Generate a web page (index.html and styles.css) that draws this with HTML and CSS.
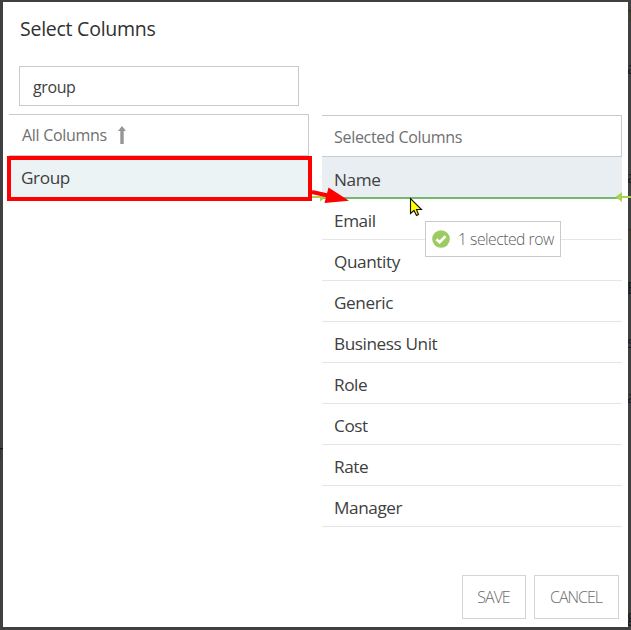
FILE: index.html
```html
<!DOCTYPE html>
<html lang="en">
<head>
<meta charset="utf-8">
<title>Select Columns</title>
<link rel="stylesheet" href="styles.css">
</head>
<body>
<div class="backdrop" aria-hidden="true">
  <span class="peek peek-r1 brown">T</span>
  <span class="peek peek-r2">a</span>
  <span class="peek peek-r3">a</span>
  <span class="peek peek-r4 brown">T</span>
  <span class="peek peek-r5">E</span>
  <span class="peek peek-r6 blue">s</span>
  <span class="peek peek-r7 blue">a</span>
  <span class="peek peek-r8">g</span>
  <span class="peek peek-l1">T</span>
</div>
<main class="dialog">
  <h1 class="title"><span>Select Columns</span></h1>
  <div class="columns">
    <section class="available">
      <div class="search"><span>group</span></div>
      <div class="available-head"><span>All Columns</span>
        <svg class="sort" width="10" height="18" viewBox="0 0 10 18"><path d="M5 0 9 5H6.7V18H3.3V5H1z" fill="#969696"/></svg>
      </div>
      <div class="available-row"><span>Group</span></div>
    </section>
    <section class="selected">
      <div class="selected-head"><span>Selected Columns</span></div>
      <div class="row target"><span>Name</span></div>
      <div class="row"><span>Email</span></div>
      <div class="row"><span>Quantity</span></div>
      <div class="row"><span>Generic</span></div>
      <div class="row"><span>Business Unit</span></div>
      <div class="row"><span>Role</span></div>
      <div class="row"><span>Cost</span></div>
      <div class="row"><span>Rate</span></div>
      <div class="row"><span>Manager</span></div>
    </section>
  </div>
  <footer class="actions">
    <button class="save"><span>SAVE</span></button>
    <button class="cancel"><span>CANCEL</span></button>
  </footer>
</main>
<div class="drag-tip">
  <svg width="18" height="18" viewBox="0 0 18 18"><circle cx="9" cy="9" r="8.8" fill="#9ccb62"/><path d="M4.4 9.2 7.6 12.2 13.5 6.3" fill="none" stroke="#fff" stroke-width="2.7"/></svg>
  <span>1 selected row</span>
</div>
<svg class="overlay" width="631" height="630" viewBox="0 0 631 630">
  <path d="M312 197H325M616 197H631" stroke="#a9d252" stroke-width="2"/>
  <path d="M320 193 326 197 320 201.500zM622 192V202L615.500 197z" fill="#a9d252"/>
  <path d="M312 192 330 196" stroke="#f00" stroke-width="4"/>
  <path d="M328.500 187.500 349 200.700 324.500 203z" fill="#f00"/>
  <path d="M410.500 198.500V213.500L414 210.500 416.500 215.500 418.500 214.500 416.500 209.500H421.500z" fill="#ff0" stroke="#111" stroke-width="1.100"/>
</svg>
</body>
</html>
```
FILE: styles.css
```css
* { box-sizing: border-box; }
body {
  margin: 0;
  width: 631px;
  height: 630px;
  padding: 2px 3px 3px;
  overflow: hidden;
  position: relative;
  background: #404040;
  color: #404040;
  font-family: "Open Sans", "Noto Sans", sans-serif;
  font-size: 17.2px;
}
.backdrop { position: absolute; inset: 0; background: #404041; }
.peek { position: absolute; left: 627px; color: #17171b; font-size: 16px; line-height: 20px; }
.brown { color: #3a2b1a; }
.blue { color: #18192e; }
.peek-r1 { top: 6px; }
.peek-r2 { top: 58px; }
.peek-r3 { top: 167px; }
.peek-r4 { top: 225px; }
.peek-r5 { top: 278px; }
.peek-r6 { top: 332px; }
.peek-r7 { top: 387px; }
.peek-r8 { top: 606px; }
.peek-l1 { top: 444px; left: -5px; }
.dialog {
  position: relative;
  display: flex;
  flex-direction: column;
  height: 625px;
  background: #fff;
}
.title {
  margin: 0;
  height: 64px;
  padding: 13px 0 0 17px;
  color: #303030;
  font-size: 19.5px;
  font-weight: 400;
  line-height: 28px;
  letter-spacing: -0.25px;
}
.columns { display: flex; gap: 10px; padding-left: 4px; }
.available { width: 305px; }
.search {
  width: 280px;
  height: 40px;
  margin: 0 0 8px 12px;
  padding-left: 13px;
  border: 1px solid #cacaca;
  font-size: 16px;
  line-height: 41px;
  letter-spacing: -0.4px;
}
.available-head {
  display: flex;
  align-items: center;
  gap: 10px;
  width: 300px;
  height: 42px;
  margin-left: 2px;
  padding-left: 13px;
  border: solid #cacaca;
  border-width: 1px 1px 1px 0;
  color: #707070;
  font-size: 16px;
  letter-spacing: -0.3px;
}
.available-row {
  height: 45px;
  padding-left: 10px;
  border: 4px solid #f00;
  background: #ebf3f5;
  line-height: 36px;
  letter-spacing: -0.4px;
}
.selected { width: 300px; padding-top: 49px; }
.selected-head {
  height: 42px;
  padding-left: 12px;
  border: solid #cacaca;
  border-width: 1px 1px 1px 0;
  color: #707070;
  font-size: 16px;
  line-height: 43px;
  letter-spacing: -0.3px;
}
.row {
  height: 41px;
  padding-left: 12px;
  border-bottom: 1px solid #e5e5e5;
  line-height: 44px;
  letter-spacing: -0.42px;
}
.row.target {
  height: 42px;
  background: #e9eef3;
  border-bottom: 2px solid #73ba6d;
  line-height: 46px;
}
.actions { display: flex; gap: 8px; justify-content: flex-end; margin-top: auto; padding: 0 9px 8px 0; }
.actions button {
  height: 44px;
  padding: 0 1px 0 0;
  border: 1px solid #d4d4d4;
  background: #fff;
  color: #6c6c6c;
  font-family: inherit;
  font-size: 16px;
  font-weight: 300;
  letter-spacing: -1px;
}
.actions .save { width: 64px; }
.actions .cancel { width: 85px; }
.drag-tip {
  position: absolute;
  left: 425px;
  top: 221px;
  display: flex;
  align-items: center;
  gap: 8px;
  width: 136px;
  height: 36px;
  padding-left: 6px;
  border: 1px solid #cacaca;
  background: #fff;
  color: #606060;
  font-size: 15.7px;
  font-weight: 300;
  letter-spacing: -0.48px;
  white-space: nowrap;
}
.overlay { position: absolute; left: 0; top: 0; }
```
